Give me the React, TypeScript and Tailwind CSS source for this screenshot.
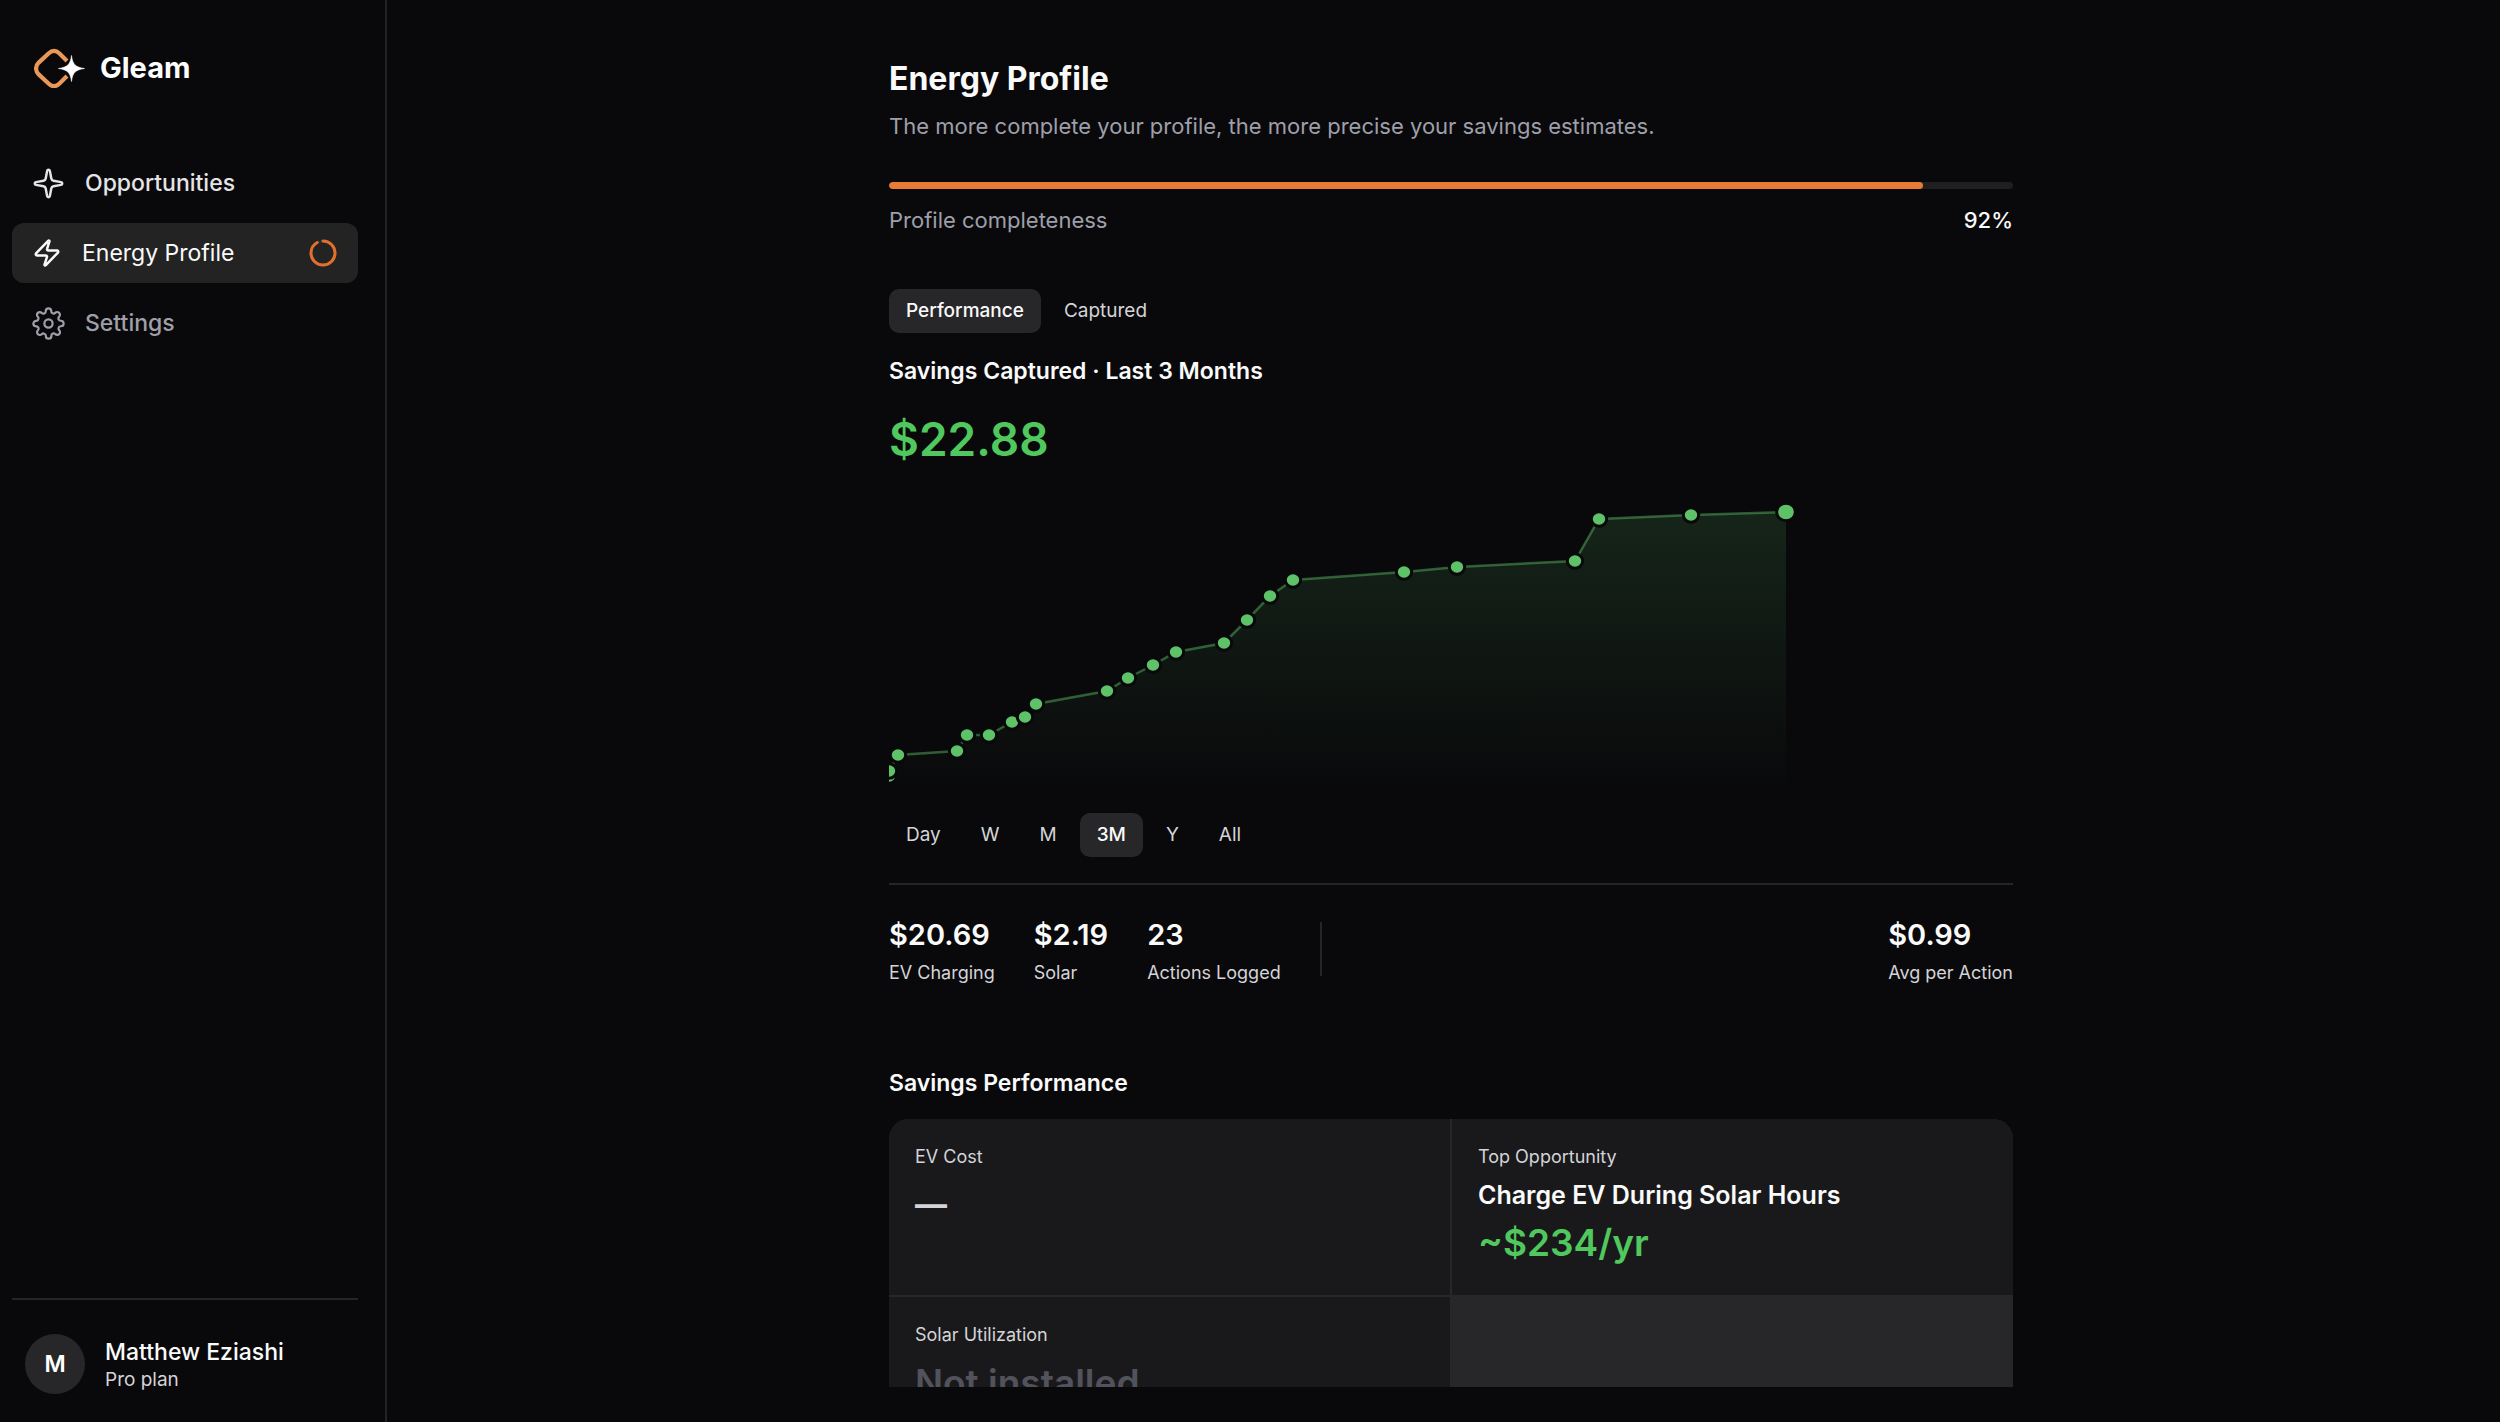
import { useState } from 'react';

import { clsx } from 'clsx';
import { Sparkle, Zap } from 'lucide-react';
import { FiSettings } from 'react-icons/fi';

const COMPLETENESS = 92;

const TABS = ['Performance', 'Captured'];
const RANGES = ['Day', 'W', 'M', '3M', 'Y', 'All'];

const STATS = [
  { value: '$20.69', label: 'EV Charging' },
  { value: '$2.19', label: 'Solar' },
  { value: '23', label: 'Actions Logged' },
];

// cumulative savings, one point per logged action
const POINTS = [
  [0, 294],
  [0, 289],
  [9, 273],
  [68, 269],
  [78, 253],
  [100, 253],
  [123, 240],
  [136, 235],
  [147, 222],
  [218, 209],
  [239, 196],
  [264, 183],
  [287, 170],
  [335, 161],
  [358, 138],
  [381, 114],
  [404, 98],
  [515, 90],
  [568, 85],
  [686, 79],
  [710, 37],
  [802, 33],
  [897, 30],
];

function Logo() {
  return (
    <svg viewBox="0 0 54 40" className="h-10 w-[54px]" fill="none" aria-hidden="true">
      <path
        d="M33 13 25.5 5.5C22 2.2 18 2.2 14.5 5.5L4.7 14.6C1.2 18 1.2 23 4.7 26.4L14.5 35.5C18 38.8 22 38.8 25.5 35.5L33 28"
        stroke="#e99858"
        strokeWidth="4.2"
      />
      <path
        d="M37.5 7.5C38.6 16 41 19.2 50.5 20.5C41 21.8 38.6 25 37.5 33.5C36.4 25 34 21.8 24.5 20.5C34 19.2 36.4 16 37.5 7.5Z"
        fill="#fff"
        stroke="#fff"
        strokeWidth="0.6"
      />
    </svg>
  );
}

function ProgressRing({ value }: { value: number }) {
  return (
    <svg viewBox="0 0 28 28" className="ml-auto h-7 w-7" fill="none" aria-hidden="true">
      <circle cx="14" cy="14" r="12" stroke="#2c2c2d" strokeWidth="3" />
      <circle
        cx="14"
        cy="14"
        r="12"
        stroke="#e2702d"
        strokeWidth="3"
        strokeLinecap="round"
        pathLength={100}
        strokeDasharray={`${value} 100`}
        transform="rotate(-90 14 14)"
      />
    </svg>
  );
}

function Sidebar() {
  return (
    <aside className="flex w-[387px] shrink-0 flex-col border-r-2 border-[#232325] pr-[27px] pl-3">
      <a href="#" className="mt-12 flex h-10 items-center gap-3 pl-[22px]">
        <Logo />
        <span className="text-[29px] leading-10 font-bold text-white">Gleam</span>
      </a>

      <nav className="mt-[65px] flex flex-col gap-[10px]">
        <a href="#" className="flex h-[60px] items-center gap-5 rounded-xl px-5 text-[23px] font-medium text-zinc-200">
          <Sparkle className="h-[33px] w-[33px]" strokeWidth={1.8} />
          Opportunities
        </a>
        <a
          href="#"
          aria-current="page"
          className="flex h-[60px] items-center gap-5 rounded-xl bg-[#232323] pr-[21px] pl-5 text-[23px] text-zinc-50"
        >
          <Zap className="h-[30px] w-[30px]" />
          Energy Profile
          <ProgressRing value={COMPLETENESS} />
        </a>
        <a href="#" className="flex h-[60px] items-center gap-5 rounded-xl px-5 text-[23px] font-medium text-zinc-400">
          <FiSettings className="h-[33px] w-[33px]" strokeWidth={1.6} />
          Settings
        </a>
      </nav>

      <div className="mt-auto border-t-2 border-[#252526] px-[13px] pt-[34px] pb-7">
        <div className="flex items-center gap-5">
          <div className="flex h-[60px] w-[60px] items-center justify-center rounded-full bg-[#272729] text-[23px] font-semibold text-white">
            M
          </div>
          <div>
            <p className="text-[23px] leading-8 font-medium text-zinc-50">Matthew Eziashi</p>
            <p className="text-[19px] leading-6 text-zinc-300">Pro plan</p>
          </div>
        </div>
      </div>
    </aside>
  );
}

type SegmentsProps = {
  label: string;
  options: string[];
  selected: string;
  onSelect: (option: string) => void;
};

function Segments({ label, options, selected, onSelect }: SegmentsProps) {
  return (
    <div role="group" aria-label={label} className="flex gap-[6px]">
      {options.map((option) => (
        <button
          key={option}
          type="button"
          aria-pressed={option === selected}
          onClick={() => onSelect(option)}
          className={clsx(
            'h-11 rounded-[10px] px-[17px] text-[19px]',
            option === selected ? 'bg-[#272729] font-medium text-zinc-50' : 'text-zinc-300',
          )}
        >
          {option}
        </button>
      ))}
    </div>
  );
}

function SavingsChart() {
  const line = POINTS.map(([x, y]) => `${x} ${y}`).join(' L');
  const last = POINTS.length - 1;

  return (
    <svg
      viewBox="0 0 1124 308"
      preserveAspectRatio="none"
      className="mt-[15px] block h-[308px] w-full"
      role="img"
      aria-label="Savings captured"
    >
      <defs>
        <linearGradient id="area" x1="0" y1="0" x2="0" y2="1">
          <stop offset="0" stopColor="#5ec269" stopOpacity="0.15" />
          <stop offset="1" stopColor="#5ec269" stopOpacity="0" />
        </linearGradient>
      </defs>
      <path d={`M${line} L${POINTS[last][0]} 308 L0 308Z`} fill="url(#area)" />
      <path d={`M${line}`} fill="none" stroke="#5ec269" strokeOpacity="0.45" strokeWidth="2.5" />
      {POINTS.map(([x, y], i) => (
        <ellipse
          key={i}
          cx={x}
          cy={y}
          rx={i === last ? 9.3 : 7.7}
          ry={i === last ? 8.8 : 7.2}
          fill="#5ec269"
          stroke="#09090b"
          strokeWidth="3"
        />
      ))}
    </svg>
  );
}

function Stat({ value, label }: { value: string; label: string }) {
  return (
    <div>
      <p className="text-[29px] leading-9 font-semibold text-zinc-50">{value}</p>
      <p className="mt-[6px] text-[18px] leading-7 text-zinc-300">{label}</p>
    </div>
  );
}

export default function App() {
  const [tab, setTab] = useState('Performance');
  const [range, setRange] = useState('3M');

  return (
    <div className="flex h-screen overflow-hidden bg-[#09090b] font-['Inter',sans-serif] antialiased">
      <Sidebar />

      <main className="min-w-0 flex-1 pb-[35px] pl-[15px]">
        <div className="h-full overflow-hidden">
          <div className="mx-auto max-w-[1124px] pt-[59px]">
            <h1 className="text-[32px] leading-10 font-bold text-zinc-50">Energy Profile</h1>
            <p className="mt-[11px] text-[22px] leading-8 text-zinc-400">
              The more complete your profile, the more precise your savings estimates.
            </p>

            <div className="mt-10 h-[7px] overflow-hidden rounded-full bg-[#1f1f20]">
              <div className="h-full rounded-full bg-[#e87c34]" style={{ width: `${COMPLETENESS}%` }} />
            </div>
            <div className="mt-[15px] flex justify-between text-[22px] leading-8">
              <span className="text-zinc-400">Profile completeness</span>
              <span className="font-medium text-zinc-50">{COMPLETENESS}%</span>
            </div>

            <div className="mt-[53px]">
              <Segments label="View" options={TABS} selected={tab} onSelect={setTab} />
            </div>
            <h2 className="mt-[22px] text-[23px] leading-8 font-semibold text-zinc-50">
              Savings Captured · Last 3 Months
            </h2>
            <p className="mt-6 text-[46px] leading-14 font-semibold text-[#50c85e]">$22.88</p>

            <SavingsChart />

            <div className="mt-[23px]">
              <Segments label="Range" options={RANGES} selected={range} onSelect={setRange} />
            </div>

            <div className="mt-[26px] flex items-start gap-[39px] border-t-2 border-[#252526] pt-8">
              {STATS.map((stat) => (
                <Stat key={stat.label} value={stat.value} label={stat.label} />
              ))}
              <div className="mt-[5px] h-[54px] w-[2px] bg-[#252526]" />
              <div className="ml-auto">
                <Stat value="$0.99" label="Avg per Action" />
              </div>
            </div>

            <h2 className="mt-20 text-[23px] leading-8 font-semibold text-zinc-50">Savings Performance</h2>
            <div className="mt-5 grid grid-cols-2 gap-[2px] overflow-hidden rounded-[20px] bg-[#272729]">
              <section className="h-44 bg-[#19191b] px-[26px] pt-6">
                <h3 className="text-[18px] leading-7 text-zinc-300">EV Cost</h3>
                <p className="mt-[10px] text-[32px] leading-12 font-bold text-zinc-300">—</p>
              </section>
              <section className="h-44 bg-[#19191b] px-[26px] pt-6">
                <h3 className="text-[18px] leading-7 text-zinc-300">Top Opportunity</h3>
                <p className="mt-2 text-[25px] leading-8 font-semibold text-zinc-50">Charge EV During Solar Hours</p>
                <p className="mt-2 text-[37px] leading-12 font-semibold text-[#50c85e]">~$234/yr</p>
              </section>
              <section className="h-44 bg-[#19191b] px-[26px] pt-6">
                <h3 className="text-[18px] leading-7 text-zinc-300">Solar Utilization</h3>
                <p className="mt-[10px] text-[37px] leading-12 font-semibold text-zinc-600">Not installed</p>
              </section>
            </div>
          </div>
        </div>
      </main>
    </div>
  );
}
